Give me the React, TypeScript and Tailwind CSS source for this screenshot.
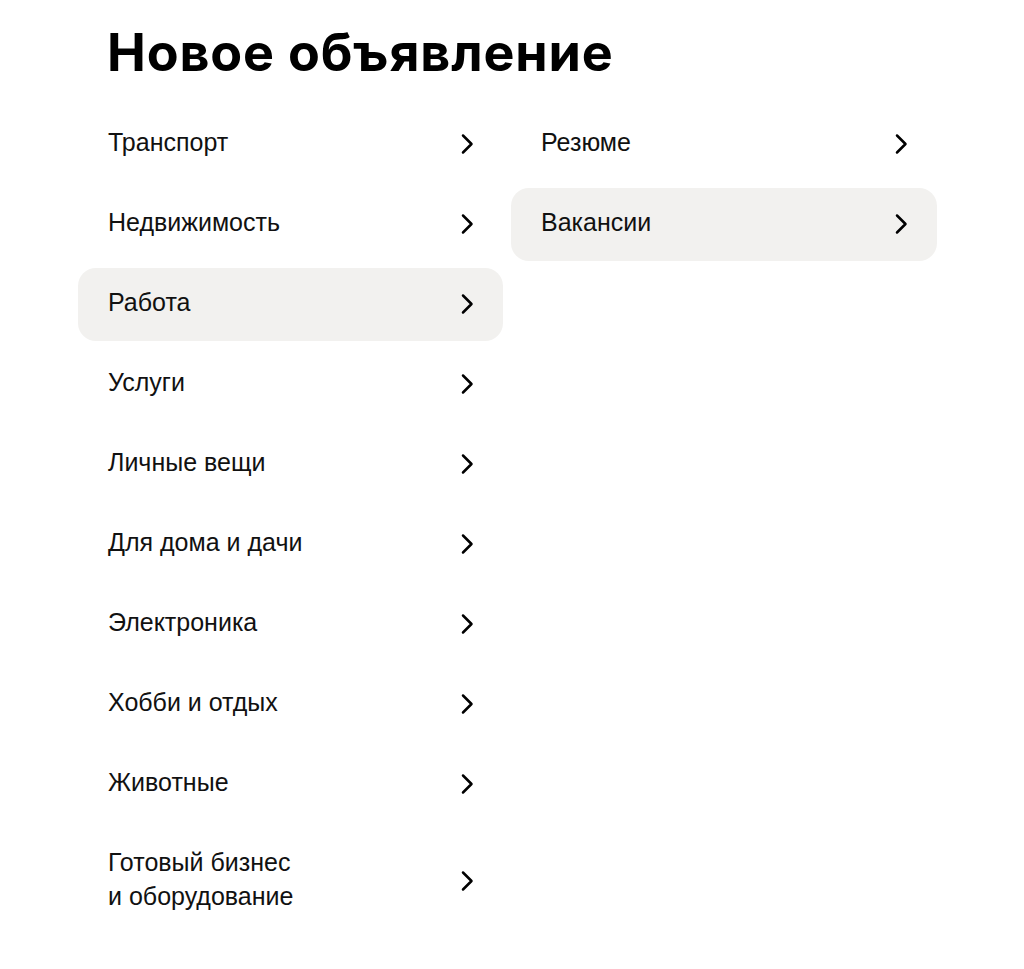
import React from "react";

const left = [
  "Транспорт",
  "Недвижимость",
  "Работа",
  "Услуги",
  "Личные вещи",
  "Для дома и дачи",
  "Электроника",
  "Хобби и отдых",
  "Животные",
  "Готовый бизнес\nи оборудование",
];
const right = ["Резюме", "Вакансии"];

function Chevron() {
  return (
    <svg width="14" height="22" viewBox="0 0 14 22" fill="none" className="shrink-0 mt-[4px]">
      <path d="M3 2.5L11.5 11L3 19.5" stroke="#000" strokeWidth="2.5" strokeLinecap="round" strokeLinejoin="round" />
    </svg>
  );
}

function Row({ label, active }: { label: string; active?: boolean }) {
  return (
    <div
      className={`flex items-center justify-between pl-[30px] pr-[29px] rounded-[18px] min-h-[73px] pt-[17px] pb-[22px] ${
        active ? "bg-[#f2f1ef]" : ""
      }`}
    >
      <span className="whitespace-pre-line text-[25px] leading-[34px] text-[#111]">{label}</span>
      <Chevron />
    </div>
  );
}

export default function App() {
  return (
    <div className="min-h-[969px] bg-white pl-[78px] pt-[21px]" style={{ fontFamily: "'Liberation Sans', Arial, sans-serif" }}>
      <h1 className="pl-[29px] text-[52px] leading-[64px] font-bold text-black tracking-[0.85px]" style={{ fontFamily: "Inter, sans-serif" }}>
        Новое объявление
      </h1>
      <div className="mt-[23px] flex gap-[8px]">
        <div className="w-[425px] flex flex-col gap-[7px]">
          {left.map((l) => (
            <Row key={l} label={l} active={l === "Работа"} />
          ))}
        </div>
        <div className="w-[426px] flex flex-col gap-[7px]">
          {right.map((l) => (
            <Row key={l} label={l} active={l === "Вакансии"} />
          ))}
        </div>
      </div>
    </div>
  );
}
